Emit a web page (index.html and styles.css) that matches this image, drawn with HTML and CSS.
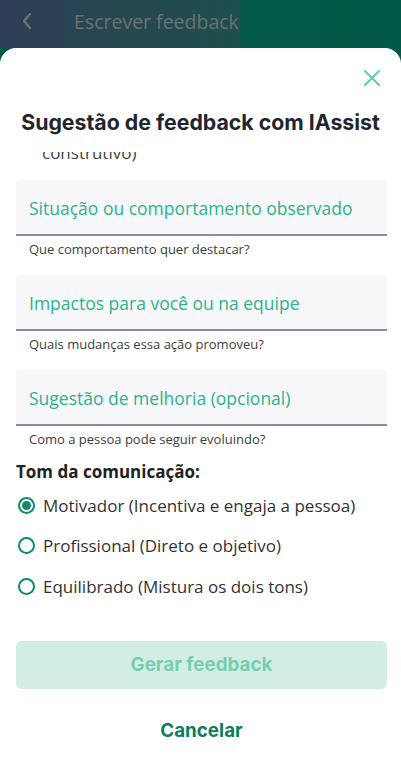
FILE: index.html
```html
<!DOCTYPE html>
<html lang="pt-BR">
<head>
    <meta charset="UTF-8">
    <meta name="viewport" content="width=device-width, initial-scale=1.0">
    <title>Sugestão de feedback com IAssist</title>
    <link rel="stylesheet" href="styles.css">
</head>
<body>

<div class="screen">
    <header class="topbar">
        <svg class="back" width="12" height="18" viewBox="0 0 12 18"><path d="M9 2 L3 9 L9 16" fill="none" stroke="#6e7474" stroke-width="2.2" stroke-linecap="round" stroke-linejoin="round"/></svg>
        <span class="topbar-title">Escrever feedback</span>
    </header>

    <div class="sheet">
        <div class="sheet-head">
            <button class="close" aria-label="Fechar">
                <svg width="18" height="18" viewBox="0 0 18 18"><path d="M2 2 L16 16 M16 2 L2 16" stroke="#63cfad" stroke-width="2.2" stroke-linecap="round"/></svg>
            </button>
            <h1>Sugestão de feedback com IAssist</h1>
        </div>

        <div class="scroll">
            <!-- previous line of the scrolled list, cut by the header -->
            <div class="clipped"><span>construtivo)</span></div>

            <div class="field">
                <div class="input">Situação ou comportamento observado</div>
                <p class="helper">Que comportamento quer destacar?</p>
            </div>
            <div class="field">
                <div class="input">Impactos para você ou na equipe</div>
                <p class="helper">Quais mudanças essa ação promoveu?</p>
            </div>
            <div class="field">
                <div class="input">Sugestão de melhoria (opcional)</div>
                <p class="helper">Como a pessoa pode seguir evoluindo?</p>
            </div>

            <h2 class="group-title">Tom da comunicação:</h2>
            <ul class="radios">
                <li class="radio checked"><span class="dot"></span>Motivador (Incentiva e engaja a pessoa)</li>
                <li class="radio"><span class="dot"></span>Profissional (Direto e objetivo)</li>
                <li class="radio"><span class="dot"></span>Equilibrado (Mistura os dois tons)</li>
            </ul>
        </div>

        <div class="actions">
            <button class="primary" disabled>Gerar feedback</button>
            <button class="link">Cancelar</button>
        </div>
    </div>
</div>

</body>
</html>
```

FILE: styles.css
```css
body {
    margin: 0;
    font-family: "Open Sans", sans-serif;
    background: #005946;
}
.screen {
    width: 401px;
    height: 768px;
    overflow: hidden;
    display: flex;
    flex-direction: column;
}
.topbar {
    height: 48px;
    display: flex;
    align-items: center;
    background: linear-gradient(to right, #2f3e57 0px, #264850 120px, #1d4f4c 240px, #035a48 241px, #005946 100%);
    padding-bottom: 6px;
    box-sizing: border-box;
}
.back {
    margin-left: 21px;
}
.topbar-title {
    margin-left: 41px;
    font-size: 19.5px;
    color: #6b7170;
}
.sheet {
    flex: 1;
    background: #fff;
    border-radius: 16px 16px 0 0;
    display: flex;
    flex-direction: column;
}
.sheet-head {
    padding: 21px 16px 0;
    display: flex;
    flex-direction: column;
}
.close {
    align-self: flex-end;
    background: none;
    border: 0;
    padding: 0;
    margin-right: 4px;
    width: 18px;
    height: 18px;
    cursor: pointer;
}
h1 {
    margin: 22px 0 0;
    font-family: Inter, sans-serif;
    font-weight: 700;
    font-size: 21.3px;
    line-height: 26px;
    color: #1f2630;
    text-align: center;
}
.scroll {
    padding: 0 14px 0 16px;
}
.clipped {
    height: 11px;
    overflow: hidden;
    position: relative;
    margin-top: 17px;
}
.clipped span {
    position: absolute;
    left: 26px;
    top: -9px;
    font-size: 17px;
    line-height: 20px;
    color: #444;
}
.field {
    margin-top: 17px;
}
.input {
    height: 56px;
    box-sizing: border-box;
    background: #f8f8fb;
    border-radius: 4px 4px 0 0;
    border-bottom: 2px solid #8b8e9a;
    padding: 16px 13px 0;
    font-size: 17.5px;
    line-height: 24px;
    color: #2bb48a;
}
.helper {
    margin: 4px 0 0 13px;
    font-size: 13px;
    line-height: 18px;
    color: #3d3d3d;
}
.group-title {
    margin: 12px 0 0;
    font-size: 17px;
    line-height: 23px;
    font-weight: 700;
    color: #222;
}
.radios {
    list-style: none;
    margin: 2px 0 0;
    padding: 0;
}
.radio {
    display: flex;
    align-items: center;
    height: 40.5px;
    font-size: 17px;
    color: #333;
}
.dot {
    width: 17px;
    height: 17px;
    box-sizing: border-box;
    border: 2px solid #118a69;
    border-radius: 50%;
    margin: 0 8px 0 2px;
    display: flex;
    align-items: center;
    justify-content: center;
}
.checked .dot::after {
    content: "";
    width: 9px;
    height: 9px;
    border-radius: 50%;
    background: #118a69;
}
.actions {
    padding: 34px 14px 0 16px;
    display: flex;
    flex-direction: column;
    align-items: center;
}
.primary {
    width: 100%;
    height: 48px;
    border: 0;
    border-radius: 6px;
    background: #d2ede5;
    color: #76cfb0;
    font-family: Inter, sans-serif;
    font-weight: 700;
    font-size: 18.8px;
}
.link {
    margin-top: 31px;
    padding: 0;
    line-height: 22px;
    background: none;
    border: 0;
    font-family: Inter, sans-serif;
    font-weight: 700;
    font-size: 18.8px;
    color: #0c7e5f;
    cursor: pointer;
}
```
